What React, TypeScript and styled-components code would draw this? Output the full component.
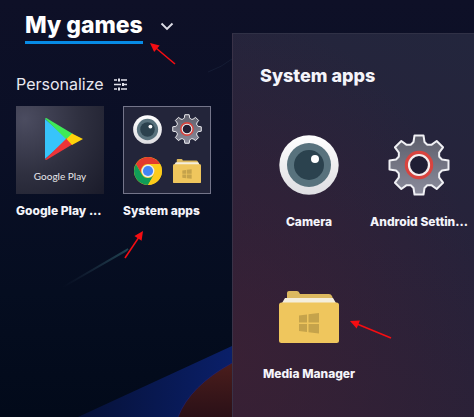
import React, { useId } from "react";
import styled, { createGlobalStyle } from "styled-components";

const GlobalStyle = createGlobalStyle`
  *, *::before, *::after { box-sizing: border-box; }
  body {
    margin: 0;
    background: #050c1e;
    color: #f4f4fa;
    font-family: Inter, "Noto Sans", sans-serif;
  }
  button {
    margin: 0;
    padding: 0;
    border: 0;
    background: none;
    color: inherit;
    font: inherit;
    text-align: left;
    cursor: pointer;
  }
  h1, h2, p { margin: 0; }
`;

const Page = styled.div`
  position: relative;
  display: grid;
  grid-template-columns: 232px minmax(0, 1fr);
  min-height: 100vh;
  overflow: hidden;
  isolation: isolate;
  background: linear-gradient(180deg, #0e1027 0%, #0a0f26 35%, #050d20 70%, #020a1a 100%);
`;

const Backdrop = styled.svg`
  position: absolute;
  left: 0;
  bottom: 0;
  z-index: -1;
`;

const Library = styled.main`
  padding: 10px 0 0 16px;
`;

const Header = styled.header`
  display: flex;
  align-items: flex-start;
  gap: 17px;
  padding-left: 9px;
`;

const TitleWrap = styled.div`
  position: relative;
`;

const Title = styled.h1`
  border-bottom: 3px solid #078be6;
  font-size: 23px;
  font-weight: 800;
  line-height: 31px;
  white-space: nowrap;
  color: #ffffff;
`;

const ChevronButton = styled.button`
  display: flex;
  padding-top: 12px;
`;

const PersonalizeButton = styled.button`
  display: flex;
  align-items: center;
  gap: 10px;
  margin-top: 28px;
  font-size: 16px;
  line-height: 24px;
  color: #e8e8f0;
`;

const TileRow = styled.div`
  display: grid;
  grid-template-columns: repeat(2, 88px);
  gap: 19px;
  margin-top: 10px;
`;

const TileButton = styled.button`
  position: relative;
  display: flex;
  flex-direction: column;
  gap: 7px;
`;

const Label = styled.span`
  font-size: 12px;
  font-weight: 800;
  line-height: 20px;
  white-space: nowrap;
`;

const PlayArt = styled.span`
  display: flex;
  flex-direction: column;
  align-items: center;
  gap: 8px;
  width: 100%;
  height: 88px;
  padding-top: 11px;
  background: radial-gradient(circle at 10% 15%, #4b4c60 0%, #2f3040 50%, #1a1b2a 100%);
`;

const PlayName = styled.span`
  font-family: Lato, sans-serif;
  font-size: 10px;
  line-height: 14px;
  color: #e6e6ea;
`;

const FolderArt = styled.span`
  display: grid;
  grid-template-columns: repeat(2, 29px);
  grid-template-rows: repeat(2, 29px);
  place-content: center;
  place-items: center;
  gap: 13px 10px;
  width: 100%;
  height: 88px;
  border: 1px solid #74758a;
  background: #23253a;
`;

const Panel = styled.section`
  margin-top: 33px;
  padding: 29px 0 16px 27px;
  border-top: 1px solid #303146;
  border-left: 1px solid #393247;
  background:
    radial-gradient(ellipse at 0% 85%, #42203399 0%, #42203300 75%),
    linear-gradient(200deg, #23263d 0%, #27223a 50%, #2c2036 100%);
`;

const PanelTitle = styled.h2`
  font-size: 18px;
  font-weight: 800;
  line-height: 26px;
`;

const AppGrid = styled.div`
  display: grid;
  grid-template-columns: repeat(auto-fill, 98px);
  gap: 54px 12px;
  margin-top: 45px;
`;

const AppButton = styled.button`
  display: flex;
  flex-direction: column;
  align-items: center;
  gap: 16px;
`;

const IconSlot = styled.span`
  position: relative;
  display: flex;
  width: 62px;
  height: 62px;
  align-items: center;
  justify-content: center;
`;

const Arrow = styled.svg<{ $left: number; $top: number }>`
  position: absolute;
  left: ${(p) => p.$left}px;
  top: ${(p) => p.$top}px;
  overflow: visible;
  pointer-events: none;
`;

type ArrowProps = { left: number; top: number; dx: number; dy: number };

// The tip is at (left, top); the tail is dx, dy away from it.
function RedArrow({ left, top, dx, dy }: ArrowProps) {
  const angle = (Math.atan2(dy, dx) * 180) / Math.PI;
  const length = Math.hypot(dx, dy);
  return (
    <Arrow $left={left} $top={top} width="1" height="1" aria-hidden="true">
      <g transform={`rotate(${angle})`}>
        <path d={`M7 0H${length}`} stroke="#f50d12" strokeWidth="1.6" />
        <path d="M0 0L9 -4.3V4.3Z" fill="#f50d12" />
      </g>
    </Arrow>
  );
}

type IconProps = { size: number };

function CameraIcon({ size }: IconProps) {
  const id = useId();
  return (
    <svg width={size} height={size} viewBox="0 0 60 60" aria-hidden="true">
      <defs>
        <linearGradient id={id} x2="0" y2="1">
          <stop stopColor="#ffffff" />
          <stop offset="1" stopColor="#dedee2" />
        </linearGradient>
      </defs>
      <circle cx="30" cy="30" r="29.7" fill={`url(#${id})`} />
      <circle cx="30" cy="30" r="22" fill="#58727d" />
      <circle cx="30" cy="30" r="15" fill="#2b424e" />
      <circle cx="36" cy="24" r="4" fill="#ffffff" />
    </svg>
  );
}

const gearPath = (() => {
  const points: string[] = [];
  for (let i = 0; i < 8; i++) {
    const a = (i * Math.PI) / 4;
    const tooth = [[-8, -20.5], [-5.5, -23], [-4.5, -29.5], [4.5, -29.5], [5.5, -23], [8, -20.5]];
    for (const [x, y] of tooth) {
      const px = x * Math.cos(a) - y * Math.sin(a);
      const py = x * Math.sin(a) + y * Math.cos(a);
      points.push(`${px.toFixed(2)} ${py.toFixed(2)}`);
    }
  }
  return `M${points.join("L")}Z`;
})();

function GearIcon({ size }: IconProps) {
  const id = useId();
  return (
    <svg width={size} height={size} viewBox="-31 -31 62 62" aria-hidden="true">
      <defs>
        <linearGradient id={id} x2="0" y2="1">
          <stop stopColor="#5d5e6b" />
          <stop offset="1" stopColor="#8b8c9c" />
        </linearGradient>
      </defs>
      <path d={gearPath} fill={`url(#${id})`} stroke="#f0f0f4" strokeWidth="2" strokeLinejoin="round" />
      <circle r="12.5" fill="none" stroke="#d9443f" strokeWidth="3.5" />
      <circle r="10" fill="#201e34" stroke="#f6eeee" strokeWidth="2.2" />
    </svg>
  );
}

function FolderIcon({ size }: IconProps) {
  return (
    <svg width={size} height={(size * 52) / 60} viewBox="0 0 60 52" aria-hidden="true">
      <path d="M4 13L8 8V2Q8 0 10 0H18Q20 0 21 3H50Q52 3 53 5L56 13Z" fill="#dcb95f" />
      <path d="M3 12L6 7H54L57 12V16H3Z" fill="#f4eedc" />
      <rect y="11.500" width="60" height="40.500" rx="2.500" fill="#efc65d" />
      <path
        d="M20 24.500L28 23.500V31.500H20ZM29.500 23.300L40 22V31.500H29.500ZM20 33H28V41L20 40ZM29.500 33H40V42.500L29.500 41.200Z"
        fill="#c5a34b"
      />
    </svg>
  );
}

function ChromeIcon({ size }: IconProps) {
  return (
    <svg width={size} height={size} viewBox="0 0 48 48" aria-hidden="true">
      <circle cx="24" cy="24" r="24" fill="#f9c91a" />
      <path d="M3.220 12A24 24 0 0 1 44.780 12H24A12 12 0 0 0 13.600 30Z" fill="#e33b2e" />
      <path d="M3.220 12A24 24 0 0 0 24 48L34.400 30A12 12 0 0 1 13.600 30Z" fill="#109d58" />
      <path d="M44.780 12A24 24 0 0 1 24 48L34.400 30A12 12 0 0 0 24 12Z" fill="#fccb1b" />
      <circle cx="24" cy="24" r="11" fill="#ececec" />
      <circle cx="24" cy="24" r="8.700" fill="#4285f4" />
    </svg>
  );
}

function PlayIcon() {
  return (
    <svg width="48" height="44" viewBox="-8 0 48 44" aria-hidden="true">
      <path d="M1 2V42L24 22Z" fill="#37c4fa" />
      <path d="M1 1.500Q2 .5 4 2L29 17L23 23Z" fill="#3fea58" />
      <path d="M1 42.500Q2 43.500 4 42L29 27L23 21Z" fill="#ed3438" />
      <path d="M28 16.500L39 22L28 28L22.500 22Z" fill="#ffd20a" />
    </svg>
  );
}

function SlidersIcon() {
  return (
    <svg width="14" height="13" viewBox="0 0 14 13" fill="none" stroke="#e2e2ec" aria-hidden="true">
      <path d="M0 2H3M7 2H13M0 6.500H7M10 6.500H13M0 11H3M7 11H13" strokeWidth="1.500" />
      <path d="M5 .5V3.500M9 5V8M5 9.500V12.500" strokeWidth="2" />
    </svg>
  );
}

function BackdropArt() {
  return (
    <Backdrop width="232" height="417" viewBox="0 0 232 417" aria-hidden="true">
      <defs>
        <linearGradient id="ray" x1="0" x2="1">
          <stop stopColor="#061137" />
          <stop offset="1" stopColor="#0a1f69" />
        </linearGradient>
        <linearGradient id="planet" x1="0" y1="0" x2="0" y2="1">
          <stop stopColor="#4b1d1c" />
          <stop offset="1" stopColor="#2a1017" />
        </linearGradient>
        <linearGradient id="streak" x1="0" x2="1">
          <stop stopColor="#26344a" stopOpacity="0" />
          <stop offset="1" stopColor="#214653" />
        </linearGradient>
      </defs>
      <path d="M78 417L232 346V417Z" fill="url(#ray)" />
      <path d="M178 417Q190 386 232 363V417Z" fill="url(#planet)" />
      <path d="M178 417Q190 386 232 363" fill="none" stroke="#24227f" strokeOpacity="0.5" />
      <path d="M63 287L128 249L126 251Z" fill="none" stroke="url(#streak)" strokeWidth="1.500" />
      <path d="M208 72Q222 67 232 59" fill="none" stroke="#151c34" />
    </Backdrop>
  );
}

export default function App() {
  return (
    <>
      <GlobalStyle />
      <Page>
        <BackdropArt />
        <Library>
          <Header>
            <TitleWrap>
              <Title>My games</Title>
              <RedArrow left={125} top={33} dx={25} dy={21} />
            </TitleWrap>
            <ChevronButton aria-label="Choose a list">
              <svg width="14" height="9" viewBox="0 0 14 9" fill="none" aria-hidden="true">
                <path d="M1.500 1.500L7 7L12.500 1.500" stroke="#dcdce6" strokeWidth="1.900" />
              </svg>
            </ChevronButton>
          </Header>
          <PersonalizeButton>
            Personalize
            <SlidersIcon />
          </PersonalizeButton>
          <TileRow>
            <TileButton>
              <PlayArt>
                <PlayIcon />
                <PlayName>Google Play</PlayName>
              </PlayArt>
              <Label>Google Play ...</Label>
            </TileButton>
            <TileButton>
              <FolderArt>
                <CameraIcon size={29} />
                <GearIcon size={30} />
                <ChromeIcon size={28} />
                <FolderIcon size={28} />
              </FolderArt>
              <Label>System apps</Label>
              <RedArrow left={20} top={125} dx={-18} dy={27} />
            </TileButton>
          </TileRow>
        </Library>
        <Panel>
          <PanelTitle>System apps</PanelTitle>
          <AppGrid>
            <AppButton>
              <IconSlot>
                <CameraIcon size={60} />
              </IconSlot>
              <Label>Camera</Label>
            </AppButton>
            <AppButton>
              <IconSlot>
                <GearIcon size={62} />
              </IconSlot>
              <Label>Android Settin...</Label>
            </AppButton>
            <AppButton>
              <IconSlot>
                <FolderIcon size={60} />
                <RedArrow left={72} top={35} dx={41} dy={17} />
              </IconSlot>
              <Label>Media Manager</Label>
            </AppButton>
          </AppGrid>
        </Panel>
      </Page>
    </>
  );
}
